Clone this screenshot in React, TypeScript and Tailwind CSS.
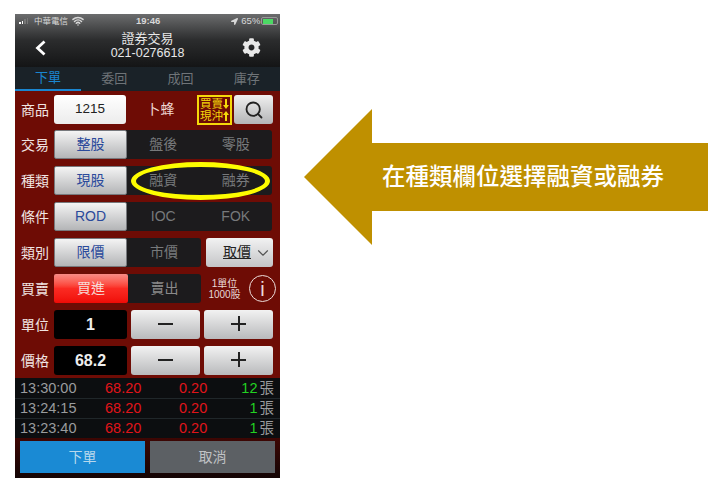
import React from 'react';
import { ChevronDown, Search, Wifi } from 'lucide-react';
import { FaCog, FaLocationArrow } from 'react-icons/fa';

const SANS = "font-['Liberation_Sans','Noto_Sans_CJK_TC',sans-serif]";

const tabs = ['下單', '委回', '成回', '庫存'];

const ticks = [
  { time: '13:30:00', price: '68.20', change: '0.20', qty: '12' },
  { time: '13:24:15', price: '68.20', change: '0.20', qty: '1' },
  { time: '13:23:40', price: '68.20', change: '0.20', qty: '1' },
];

const Label = ({ text }: { text: string }) => (
  <span className="w-[39px] shrink-0 pl-[6px] text-[14px] leading-none text-[#f0e4e2]">{text}</span>
);

const Segmented = ({ items, className }: { items: string[]; className: string }) => (
  <div className={`flex h-[29px] rounded-[3px] bg-[#1c1b1d] ${className}`}>
    {items.map((item, i) => (
      <div
        key={item}
        className={
          i === 0
            ? 'flex w-[73px] shrink-0 items-center justify-center rounded-[2px] border border-[#77797d] bg-gradient-to-b from-[#f4f4f4] to-[#b4b5b7] text-[14px] text-[#2b4a9b]'
            : 'flex flex-1 items-center justify-center text-[14px] text-[#77797b]'
        }
      >
        {item}
      </div>
    ))}
  </div>
);

const StepButton = ({ sign }: { sign: 'minus' | 'plus' }) => (
  <button className="relative h-[29px] w-[69px] rounded-[3px] bg-gradient-to-b from-[#f2f2f2] to-[#b9babc]">
    <span className="absolute top-[13px] left-[27px] h-[2px] w-[15px] bg-[#222]" />
    {sign === 'plus' && <span className="absolute top-[6px] left-[33.5px] h-[15px] w-[2px] bg-[#222]" />}
  </button>
);

const SmallArrow = ({ up }: { up?: boolean }) => (
  <svg width="6" height="10" viewBox="0 0 6 10" className="shrink-0">
    <path d={up ? 'M3 0 6 4H4V10H2V4H0Z' : 'M2 0H4V6H6L3 10 0 6H2Z'} fill="#f5d90a" />
  </svg>
);

export default function App() {
  return (
    <div className={`flex h-[496px] w-[722px] items-start overflow-hidden bg-white ${SANS}`}>
      <div className="relative mt-[14px] ml-[15px] flex h-[464px] w-[265px] shrink-0 flex-col">
        {/* Status bar + title */}
        <div className="h-[53px] bg-gradient-to-b from-[#6c6d6e] via-[#2b2c2d] to-[#141516] text-white">
          <div className="flex h-[14px] items-center pl-[4px] text-[8.5px] leading-none text-[#d8d8d8]">
            <span className="flex items-end gap-[1px]">
              <i className="h-[2px] w-[1.5px] bg-white" />
              <i className="h-[3px] w-[1.5px] bg-white" />
              <i className="h-[5px] w-[1.5px] bg-[#777]" />
              <i className="h-[6px] w-[1.5px] bg-[#777]" />
            </span>
            <span className="ml-[6px]">中華電信</span>
            <Wifi size={12} strokeWidth={3} className="ml-[4px]" />
            <span className="ml-[52px] text-[9.5px] font-bold">19:46</span>
            <FaLocationArrow size={7} className="ml-[71px]" />
            <span className="ml-[3px] text-[9.5px]">65%</span>
            <span className="ml-[1px] flex h-[8px] w-[17px] rounded-[2px] border border-[#999] p-[0.5px]">
              <i className="h-full w-[10px] bg-[#4cd964]" />
            </span>
          </div>
          <div className="flex h-[39px] items-center justify-between pr-[19px] pl-[19px]">
            <svg width="13" height="16" viewBox="0 0 13 16">
              <path d="M10.5 1.5 3.5 8l7 6.5" fill="none" stroke="#fff" strokeWidth="2.8" />
            </svg>
            <div className="-mt-[3px] pl-[6px] text-center leading-[14px] text-[#e8e8e8]">
              <div className="text-[13px]">證券交易</div>
              <div className="text-[12.5px]">021-0276618</div>
            </div>
            <FaCog size={19} className="text-[#e8e8e8]" />
          </div>
        </div>

        {/* Tabs */}
        <div className="flex h-[24px] bg-[#1a2228]">
          {tabs.map((tab, i) => (
            <div
              key={tab}
              className={
                i === 0
                  ? 'flex flex-1 items-center justify-center border-b-2 border-[#1a86d0] text-[13px] text-[#1a86d0]'
                  : 'flex flex-1 items-center justify-center text-[13px] text-[#6f7478]'
              }
            >
              {tab}
            </div>
          ))}
        </div>

        {/* Order form */}
        <div className="flex h-[287px] flex-col gap-[7px] bg-[#6e0c05] pt-[4px]">
          <div className="-mb-[1px] flex h-[29px] items-center">
            <Label text="商品" />
            <div className="flex h-[29px] w-[72px] items-center justify-center rounded-[3px] bg-gradient-to-b from-white to-[#ececec] text-[13.5px] text-[#222]">
              1215
            </div>
            <span className="w-[71px] pr-[2px] text-center text-[14px] text-[#f0d8d4]">卜蜂</span>
            <div className="flex h-[30px] w-[35px] flex-col justify-center border-2 border-[#f5d90a] bg-[#6e0c05] pl-[1px] text-[11.5px] leading-[12px] text-[#f5d90a]">
              <span className="flex items-center whitespace-nowrap">
                買賣
                <SmallArrow />
              </span>
              <span className="flex items-center whitespace-nowrap">
                現沖
                <SmallArrow up />
              </span>
            </div>
            <button className="ml-[2px] flex h-[29px] w-[39px] items-center justify-center rounded-[3px] bg-gradient-to-b from-[#f0f0f0] to-[#b4b5b7]">
              <Search size={20} strokeWidth={2.2} className="text-[#222]" />
            </button>
          </div>

          <div className="flex items-center">
            <Label text="交易" />
            <Segmented items={['整股', '盤後', '零股']} className="w-[218px]" />
          </div>
          <div className="flex items-center">
            <Label text="種類" />
            <Segmented items={['現股', '融資', '融券']} className="w-[218px]" />
          </div>
          <div className="flex items-center">
            <Label text="條件" />
            <Segmented items={['ROD', 'IOC', 'FOK']} className="w-[218px]" />
          </div>

          <div className="flex items-center">
            <Label text="類別" />
            <Segmented items={['限價', '市價']} className="w-[147px]" />
            <button className="ml-[5px] flex h-[29px] w-[67px] items-center justify-end gap-[3px] rounded-[3px] bg-gradient-to-b from-[#f2f2f2] to-[#c4c5c7] pr-[1px] text-[14px] text-[#222]">
              <span className="underline">取價</span>
              <ChevronDown size={18} strokeWidth={1.5} className="text-[#555]" />
            </button>
          </div>

          <div className="flex items-center">
            <Label text="買賣" />
            <div className="flex h-[29px] w-[147px] rounded-[3px] bg-[#1c1b1d]">
              <div className="flex w-[74px] items-center justify-center rounded-[2px] bg-gradient-to-b from-[#f98a85] via-[#fb2a22] to-[#f00a06] text-[14px] text-[#f6dcd8]">
                買進
              </div>
              <div className="flex flex-1 items-center justify-center text-[14px] text-[#8a8a8a]">賣出</div>
            </div>
            <div className="ml-[5px] w-[37px] text-center text-[10px] leading-[11px] text-[#e8d8d6]">
              <div>1單位</div>
              <div>1000股</div>
            </div>
            <div className="ml-[6px] flex h-[27px] w-[27px] items-center justify-center rounded-full border-[1.5px] border-[#ecdcda] text-[20px] leading-none text-[#ecdcda]">
              i
            </div>
          </div>

          <div className="flex items-center">
            <Label text="單位" />
            <div className="flex h-[29px] w-[73px] items-center justify-center rounded-[3px] bg-black text-[16px] font-bold text-[#eee]">
              1
            </div>
            <div className="ml-[4px] flex gap-[4px]">
              <StepButton sign="minus" />
              <StepButton sign="plus" />
            </div>
          </div>

          <div className="flex items-center">
            <Label text="價格" />
            <div className="flex h-[29px] w-[73px] items-center justify-center rounded-[3px] bg-black text-[16px] font-bold text-[#eee]">
              68.2
            </div>
            <div className="ml-[4px] flex gap-[4px]">
              <StepButton sign="minus" />
              <StepButton sign="plus" />
            </div>
          </div>
        </div>

        {/* Latest trades */}
        <div className="flex h-[60px] flex-col bg-[#0c0e10] pt-[1px]">
          {ticks.map((tick, i) => (
            <div
              key={tick.time}
              className={`flex h-[20px] shrink-0 items-center pr-[6px] pl-[5px] text-[14.5px] ${i < 2 ? 'border-b border-[#20272a]' : ''}`}
            >
              <span className="w-[85px] text-[#9a9c9e]">{tick.time}</span>
              <span className="w-[74px] text-[#e0141a]">{tick.price}</span>
              <span className="w-[50px] text-[#e0141a]">{tick.change}</span>
              <span className="flex-1 text-right text-[#22d222]">{tick.qty}</span>
              <span className="ml-[2px] text-[#9a9c9e]">張</span>
            </div>
          ))}
        </div>

        {/* Actions */}
        <div className="flex h-[40px] items-start gap-[5px] bg-gradient-to-b from-[#3e0603] to-[#140404] px-[5px] pt-[3px]">
          <button className="h-[32px] w-[125px] bg-[#1a8ad4] text-[14px] text-[#b8d8ec]">下單</button>
          <button className="h-[32px] w-[125px] bg-[#5c6064] text-[14px] text-[#c0c2c4]">取消</button>
        </div>

        {/* Highlight ring */}
        <div className="absolute top-[148px] left-[116px] h-[38px] w-[139px] rounded-[50%] border-[5px] border-[#fdfd00]" />
      </div>

      {/* Callout arrow */}
      <div className="relative mt-[109px] ml-[24px] flex h-[136px] w-[404px] shrink-0 items-center">
        <svg className="absolute inset-0" width="404" height="136" viewBox="0 0 404 136">
          <path d="M0 68 68 0V34H404V102H68V136Z" fill="#bf9000" />
        </svg>
        <span className="relative ml-[78px] pt-[2px] text-[23.5px] leading-none font-medium whitespace-nowrap text-white">在種類欄位選擇融資或融券</span>
      </div>
    </div>
  );
}
